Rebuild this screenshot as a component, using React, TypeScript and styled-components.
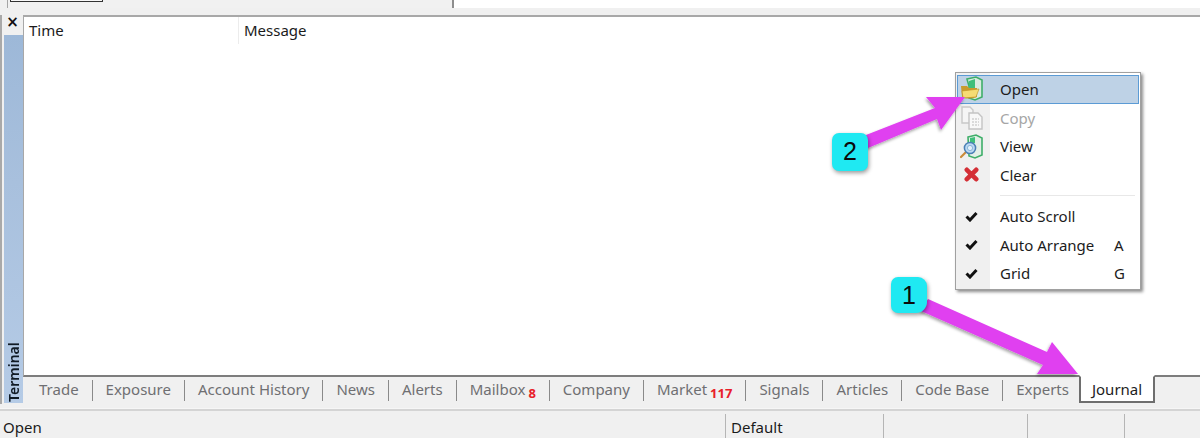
import React from "react"
import styled, { createGlobalStyle } from "styled-components"

const Global = createGlobalStyle`
  html, body {
    margin: 0;
    padding: 0;
    background: #fff;
  }
  body {
    font-family: "Noto Sans", "Open Sans", sans-serif;
    color: #1b1b1b;
  }
`

const Page = styled.div`
  position: relative;
  width: 1200px;
  height: 438px;
  overflow: hidden;
  display: flex;
  flex-direction: column;
  background: #f0f0f0;
`

const TopStrip = styled.div`
  height: 8px;
  display: flex;
  background: #fff;
  flex: none;
`

const TopMargin = styled.div`
  width: 7px;
  flex: none;
  background: #f0f0f0;
`

const TopLeft = styled.div`
  width: 447px;
  height: 8px;
  box-sizing: border-box;
  padding-left: 2px;
  background: #f1f1f1;
  border-right: 2px solid #8e8e8e;
  border-left: 1px solid #a5a5a5;
`

const TopTab = styled.div`
  width: 93px;
  height: 2px;
  box-sizing: border-box;
  background: #f8f8f8;
  border-bottom: 1px solid #333;
  border-right: 1px solid #333;
  border-left: 1px solid #333;
`

const Gutter = styled.div`
  height: 7px;
  flex: none;
  background: #f0f0f0;
`

const Terminal = styled.div`
  display: flex;
  height: 389px;
  flex: none;
  border-left: 2px solid #a9a9a9;
`

const Sidebar = styled.aside`
  width: 19px;
  flex: none;
  padding-left: 2px;
  display: flex;
  flex-direction: column;
`

const CloseMark = styled.div`
  height: 20px;
  width: 17px;
  font: 700 15px/14px "DejaVu Sans", sans-serif;
  color: #111;
  display: flex;
  justify-content: center;
`

const SideTitle = styled.div`
  width: 19px;
  height: 368px;
  background: linear-gradient(#b5cbe6, #a8c0dd 60%, #9db8d8);
  writing-mode: vertical-rl;
  transform: rotate(180deg);
  font-size: 14px;
  font-weight: 600;
  line-height: 19px;
  padding-top: 1px;
  box-sizing: border-box;
  color: #101a24;
`

const Body = styled.div`
  flex: 1;
  display: flex;
  flex-direction: column;
  min-width: 0;
`

const LogPane = styled.div`
  height: 362px;
  flex: none;
  box-sizing: border-box;
  background: #fff;
  border-top: 2px solid #a8a8a8;
  border-left: 1px solid #a8a8a8;
  border-bottom: 2px solid #7d7d7d;
`

const ColumnHeader = styled.div`
  display: flex;
  height: 27px;
  font-size: 15px;
  line-height: 27px;
`

const Column = styled.div<{ $width?: number }>`
  width: ${(p) => (p.$width ? `${p.$width}px` : "auto")};
  box-sizing: border-box;
  padding-left: 5px;
  border-right: ${(p) => (p.$width ? "1px solid #ececec" : "none")};
`

const TabRow = styled.nav`
  display: flex;
  height: 25px;
  padding-left: 3px;
  align-items: flex-start;
`

const Tab = styled.div<{ $noRule?: boolean }>`
  height: 21px;
  margin-top: 3px;
  margin-right: ${(p) => (p.$noRule ? "-4px" : "0")};
  box-sizing: border-box;
  padding: 0 13px;
  font-size: 15px;
  line-height: 18px;
  white-space: nowrap;
  color: #6f6f72;
  border-right: 1px solid ${(p) => (p.$noRule ? "transparent" : "#8a8a8a")};
`

const ActiveTab = styled.div`
  height: 28px;
  margin-top: -2px;
  box-sizing: border-box;
  padding: 0 11px;
  font-size: 15px;
  line-height: 24px;
  white-space: nowrap;
  color: #1d1d1d;
  background: #fff;
  border: 2px solid #6e6e6e;
  border-top-color: #fff;
`

const TabCount = styled.span`
  margin-left: 3px;
  font-size: 13px;
  font-weight: 700;
  color: #e8202a;
  position: relative;
  top: 3px;
`

const Rule = styled.div`
  height: 2px;
  flex: none;
  margin-top: 4px;
  background: #d4d4d4;
  border-top: 1px solid #f6f6f6;
`

const StatusBar = styled.footer`
  flex: 1;
  display: flex;
  font-size: 15px;
  line-height: 27px;
  margin-top: 3px;
`

const StatusCell = styled.div<{ $width: number }>`
  width: ${(p) => p.$width}px;
  flex: none;
  box-sizing: border-box;
  padding-left: 5px;
  border-left: 1px solid #b5b5b5;
  height: 25px;
  &:first-child {
    border-left: none;
    padding-left: 3px;
  }
`

const ContextMenu = styled.div`
  position: absolute;
  left: 955px;
  top: 72px;
  width: 186px;
  height: 218px;
  box-sizing: border-box;
  background: linear-gradient(to right, #f0f0f0 0, #f0f0f0 34px, #fff 34px);
  border: 1px solid #a0a0a0;
  box-shadow: 2px 2px 3px rgba(0, 0, 0, 0.45);
  padding: 2px 1px;
  font-size: 15px;
`

const MenuRow = styled.div<{ $hot?: boolean; $off?: boolean }>`
  height: 28.5px;
  box-sizing: border-box;
  display: flex;
  align-items: center;
  color: ${(p) => (p.$off ? "#a6a6a6" : "#1c1c1c")};
  background: ${(p) => (p.$hot ? "#bed2e6" : "transparent")};
  border: 1px solid ${(p) => (p.$hot ? "#5b9bd5" : "transparent")};
`

const MenuIcon = styled.span`
  width: 42px;
  flex: none;
  display: flex;
  align-items: center;
  box-sizing: border-box;
  justify-content: center;
  padding-right: 15px;
`

const MenuLabel = styled.span`
  flex: 1;
`

const MenuKey = styled.span`
  width: 24px;
`

const MenuDivider = styled.div`
  height: 1px;
  margin: 6px 4px 6px 43px;
  background: #e8e8e8;
`

const Callout = styled.div<{ $x: number; $y: number; $leaf?: boolean }>`
  position: absolute;
  left: ${(p) => p.$x}px;
  top: ${(p) => p.$y}px;
  width: 36px;
  height: ${(p) => (p.$leaf ? "36px" : "38px")};
  background: #1fe9f2;
  border-radius: ${(p) => (p.$leaf ? "7px 9px 11px 7px" : "7px")};
  box-shadow: 1px 2px 4px rgba(0, 0, 0, 0.4);
  font: 400 25px/37px "Liberation Sans", sans-serif;
  color: #0a0a0a;
  text-align: center;
`

const ArrowLayer = styled.svg`
  position: absolute;
  left: 0;
  top: 0;
  pointer-events: none;
`

const OpenIcon = () => (
  <svg width="24" height="26" viewBox="0 0 24 26">
    <path d="M7 3 L16 1 L22 4 V21 L15 24 L9 22 V10 Z" fill="#d9ebe0" stroke="#3fae69" strokeWidth="1.6" />
    <path d="M9 5 L15 3 V13 L9 14 Z" fill="#3fbf7a" />
    <path d="M1 10 H7 L9 12 H17 V21 Q8 24 2 21 Z" fill="#c99b2e" />
    <path d="M2 15 L19 13 L16 21 L3 22 Z" fill="#f6dc73" stroke="#b98d20" strokeWidth="0.6" />
  </svg>
)

const CopyIcon = () => (
  <svg width="24" height="24" viewBox="0 0 24 24">
    <path d="M2 1 H10 L13 4 V17 H2 Z" fill="#f5f5f5" stroke="#c8c8c8" strokeWidth="1.4" />
    <path d="M9 7 H18 L22 11 V23 H9 Z" fill="#f8f8f8" stroke="#c4c4c4" strokeWidth="1.4" />
    <path d="M12 13 H19 M12 16 H19 M12 19 H19" stroke="#cfcfcf" strokeWidth="1.5" strokeDasharray="2 1" />
  </svg>
)

const ViewIcon = () => (
  <svg width="24" height="25" viewBox="0 0 24 25">
    <path d="M8 3 L16 1 L22 4 V21 L15 24 L9 22 Z" fill="#e3efe7" stroke="#3fae69" strokeWidth="1.6" />
    <path d="M10 4 L15 3 V9 L10 10 Z" fill="#3fbf7a" />
    <path d="M6 18 L1 23" stroke="#c98a3a" strokeWidth="2.2" strokeLinecap="round" />
    <circle cx="10" cy="14" r="5.6" fill="#bcd9f2" stroke="#4a7fb5" strokeWidth="1.5" />
    <circle cx="10" cy="14" r="2.6" fill="#e3f1fb" stroke="#7aa9d1" strokeWidth="0.8" />
  </svg>
)

const ClearIcon = () => (
  <svg width="15" height="15" viewBox="0 0 15 15">
    <path d="M2.8 2.8 L12.2 12.2 M12.2 2.8 L2.8 12.2" stroke="#d42f36" strokeWidth="4.6" strokeLinecap="round" />
  </svg>
)

const CheckIcon = () => (
  <svg width="13" height="11" viewBox="0 0 13 11">
    <path d="M1.5 5.5 L5 9 L11.5 2" fill="none" stroke="#111" strokeWidth="3" />
  </svg>
)

const tabs = [
  { label: "Trade" },
  { label: "Exposure" },
  { label: "Account History" },
  { label: "News" },
  { label: "Alerts" },
  { label: "Mailbox", count: "8" },
  { label: "Company" },
  { label: "Market", count: "117" },
  { label: "Signals" },
  { label: "Articles" },
  { label: "Code Base" },
  { label: "Experts" },
]

export default function App() {
  return (
    <Page>
      <Global />
      <TopStrip>
        <TopMargin />
        <TopLeft>
          <TopTab />
        </TopLeft>
      </TopStrip>
      <Gutter />
      <Terminal>
        <Sidebar>
          <CloseMark>×</CloseMark>
          <SideTitle>Terminal</SideTitle>
        </Sidebar>
        <Body>
          <LogPane>
            <ColumnHeader>
              <Column $width={215}>Time</Column>
              <Column>Message</Column>
            </ColumnHeader>
          </LogPane>
          <TabRow>
            {tabs.map((t, i) => (
              <Tab key={t.label} $noRule={i === tabs.length - 1}>
                {t.label}
                {t.count && <TabCount>{t.count}</TabCount>}
              </Tab>
            ))}
            <ActiveTab>Journal</ActiveTab>
          </TabRow>
        </Body>
      </Terminal>
      <Rule />
      <StatusBar>
        <StatusCell $width={725}>Open</StatusCell>
        <StatusCell $width={158}>Default</StatusCell>
        <StatusCell $width={144} />
        <StatusCell $width={97} />
        <StatusCell $width={76} />
      </StatusBar>

      <ContextMenu>
        <MenuRow $hot>
          <MenuIcon><OpenIcon /></MenuIcon>
          <MenuLabel>Open</MenuLabel>
        </MenuRow>
        <MenuRow $off>
          <MenuIcon><CopyIcon /></MenuIcon>
          <MenuLabel>Copy</MenuLabel>
        </MenuRow>
        <MenuRow>
          <MenuIcon><ViewIcon /></MenuIcon>
          <MenuLabel>View</MenuLabel>
        </MenuRow>
        <MenuRow>
          <MenuIcon><ClearIcon /></MenuIcon>
          <MenuLabel>Clear</MenuLabel>
        </MenuRow>
        <MenuDivider />
        <MenuRow>
          <MenuIcon><CheckIcon /></MenuIcon>
          <MenuLabel>Auto Scroll</MenuLabel>
        </MenuRow>
        <MenuRow>
          <MenuIcon><CheckIcon /></MenuIcon>
          <MenuLabel>Auto Arrange</MenuLabel>
          <MenuKey>A</MenuKey>
        </MenuRow>
        <MenuRow>
          <MenuIcon><CheckIcon /></MenuIcon>
          <MenuLabel>Grid</MenuLabel>
          <MenuKey>G</MenuKey>
        </MenuRow>
      </ContextMenu>

      <ArrowLayer width="1200" height="438" viewBox="0 0 1200 438">
        <defs>
          <filter id="arrowShadow" x="-10%" y="-10%" width="120%" height="130%">
            <feDropShadow dx="-1" dy="2" stdDeviation="1.5" floodColor="#000" floodOpacity="0.35" />
          </filter>
        </defs>
        <path
          d="M866 135 L935 108 L926 97 L965 97 L941 130 L937 119 L868 148 Z"
          fill="#e03ff0"
          filter="url(#arrowShadow)"
        />
        <path
          d="M928 299 L1047 352 L1052 342 L1078 374 L1037 374 L1043 365 L921 311 Z"
          fill="#e03ff0"
          filter="url(#arrowShadow)"
        />
      </ArrowLayer>
      <Callout $x={832} $y={133}>2</Callout>
      <Callout $x={891} $y={277} $leaf>1</Callout>
    </Page>
  )
}
